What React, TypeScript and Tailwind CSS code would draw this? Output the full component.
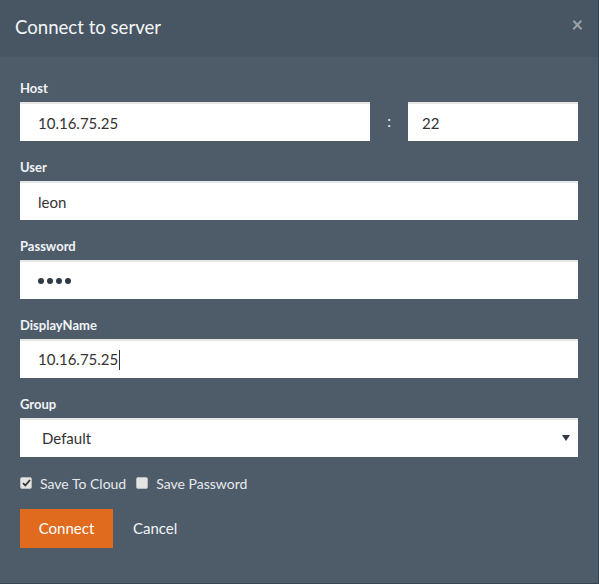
import React from 'react'

const Field = ({ label, children }: { label: string; children: React.ReactNode }) => (
  <div className="mb-[17px]">
    <div className="text-[13px] font-bold leading-[18px] text-[#f1f3f5] mb-[5px]">{label}</div>
    {children}
  </div>
)

const inputCls =
  'h-[39px] w-full bg-white border-t-2 border-[#e6e6e6] px-[18px] text-[15px] text-[#333] outline-none'

const App = () => {
  return (
    <div className="w-[599px] h-[584px] bg-[#4e5c6a] border-r border-b border-[#3a444e] font-['Lato','Liberation_Sans',sans-serif]">
      {/* Header */}
      <div className="h-[57px] bg-[#485562] flex items-center justify-between pl-[15px] pr-[15px]">
        <h1 className="text-[18.6px] text-[#f4f6f8] leading-none -mt-[2px]">Connect to server</h1>
        <span className="text-[20px] font-bold leading-none text-[#9aa3ad] -mt-[9px]">×</span>
      </div>

      <div className="px-[20px] pt-[22px]">
        <Field label="Host">
          <div className="flex items-center">
            <input className={inputCls + ' flex-1'} defaultValue="10.16.75.25" />
            <span className="w-[38px] text-center text-[15px] text-[#f1f3f5]">:</span>
            <input className={inputCls + ' !w-[170px] !px-[14px]'} defaultValue="22" />
          </div>
        </Field>
        <Field label="User">
          <input className={inputCls} defaultValue="leon" />
        </Field>
        <Field label="Password">
          <div className={inputCls + ' flex items-center gap-[3px]'}>
            {[0, 1, 2, 3].map((i) => (
              <span key={i} className="w-[6px] h-[6px] rounded-full bg-[#2f3a46]" />
            ))}
          </div>
        </Field>
        <Field label="DisplayName">
          <div className={inputCls + ' flex items-center'}>
            <span>10.16.75.25</span>
            <span className="w-px h-[20px] bg-[#333] ml-[1px]" />
          </div>
        </Field>
        <Field label="Group">
          <div className={inputCls + ' flex items-center justify-between !pl-[22px] !pr-[8px]'}>
            <span>Default</span>
            <svg width="8" height="7" viewBox="0 0 8 7">
              <path d="M0 0h8L4 6z" fill="#2f3a46" />
            </svg>
          </div>
        </Field>

        <div className="flex items-center text-[14px] text-[#e6e9ec] h-[18px]">
          <span className="w-[12px] h-[12px] rounded-[2px] bg-[#e4e4e4] border border-[#bbb] flex items-center justify-center">
            <svg width="9" height="8" viewBox="0 0 9 8">
              <path d="M1 4.2l2.3 2.3L8 1" stroke="#333" strokeWidth="1.8" fill="none" />
            </svg>
          </span>
          <span className="ml-[8px]">Save To Cloud</span>
          <span className="ml-[10px] w-[12px] h-[12px] rounded-[2px] bg-[#e4e4e4] border border-[#bbb]" />
          <span className="ml-[8px]">Save Password</span>
        </div>

        <div className="flex items-center mt-[17px]">
          <button className="h-[39px] w-[93px] bg-[#e06b1e] text-white text-[15px]">Connect</button>
          <button className="ml-[20px] text-[15px] text-[#f1f3f5]">Cancel</button>
        </div>
      </div>
    </div>
  )
}

export default App
